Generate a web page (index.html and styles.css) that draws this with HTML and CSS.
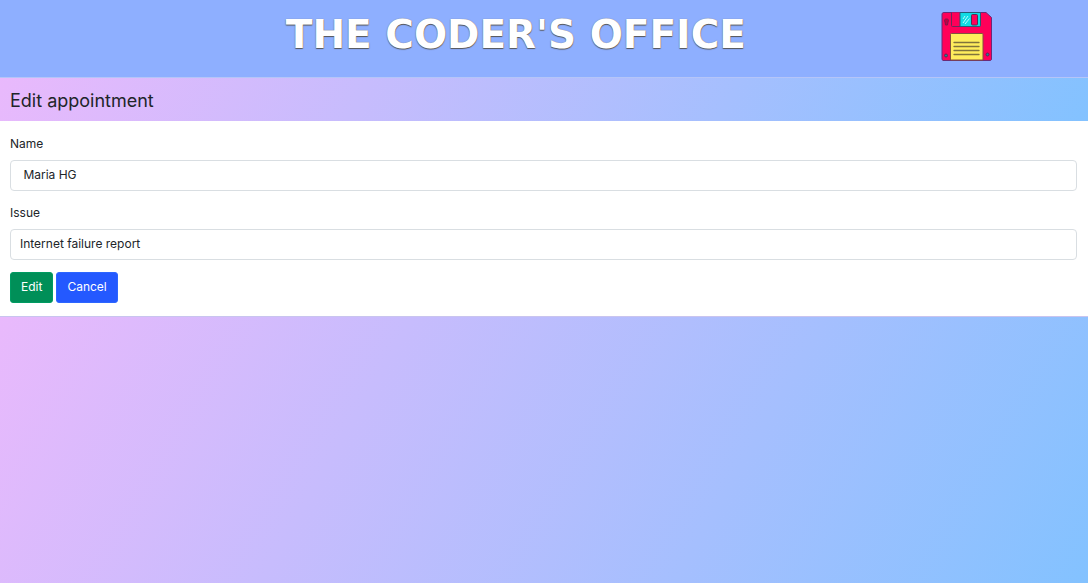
FILE: index.html
```html
<!DOCTYPE html>
<html lang="en">
<head>
<meta charset="utf-8">
<meta name="viewport" content="width=device-width, initial-scale=1">
<title>The Coder's Office</title>
<link rel="stylesheet" href="styles.css">
</head>
<body>
<header class="banner">
  <h1 class="banner-title">THE CODER'S OFFICE</h1>
  <svg class="banner-logo" viewBox="0 0 54 52" role="img" aria-label="Floppy disk">
    <path d="M4 1.500H46L51.500 6.500V48Q51.500 49 50.500 49.500H3Q2 49 2 48V3Q2 1.500 4 1.500Z" fill="#ff0059" stroke="#6b2a78" stroke-width="1"/>
    <path d="M11.500 1.500V14.500Q11.500 15.500 12.500 15.500H39Q40.500 15.500 40.500 14.500V1.500" fill="#ff0059" stroke="#6b2a5c" stroke-width="1"/>
    <path d="M20 1.500H40.500V14.500Q40.500 15.500 39 15.500H20Z" fill="#10dce4" stroke="#245d77" stroke-width="1"/>
    <rect x="31.500" y="3.500" width="6" height="10.500" rx="1" fill="#ff0059" stroke="#5c2854"/>
    <path d="M23 12L28 5M25 13L29.500 7.500M23 8L25 5" stroke="#b8fbff" stroke-width="1"/>
    <path d="M5 11Q3.500 8 6.500 8Q9.500 8 8 11L7.500 14H5.500Z" fill="#c00045" stroke="#7b174e" stroke-width="1"/>
    <path d="M10.500 49V23.500Q10.500 22.500 11.500 22.500H42Q43 22.500 43 23.500V49Z" fill="#ffed5c" stroke="#82533c" stroke-width="1"/>
    <path d="M14 31.500H39M14 35.500H39M14 39.500H39M14 43.500H39" stroke="#80733c" stroke-width="1.300" stroke-linecap="round"/>
    <circle cx="6" cy="44.500" r="1.500" fill="#168a9b" stroke="#5c2854"/>
    <circle cx="47.500" cy="43.500" r="1.500" fill="#168a9b" stroke="#5c2854"/>
  </svg>
</header>
<main class="card">
  <h2 class="card-header">Edit appointment</h2>
  <form class="card-body">
    <div class="field">
      <label for="name">Name</label>
      <input class="control" id="name" type="text" value=" Maria HG">
    </div>
    <div class="field">
      <label for="issue">Issue</label>
      <input class="control" id="issue" type="text" value="Internet failure report">
    </div>
    <div class="actions">
      <button class="btn btn-edit" type="submit">Edit</button>
      <button class="btn btn-cancel" type="button">Cancel</button>
    </div>
  </form>
</main>
<div class="backdrop"></div>
</body>
</html>
```
FILE: styles.css
```css
* {
  box-sizing: border-box;
}

body {
  display: flex;
  flex-direction: column;
  min-height: 100vh;
  margin: 0;
  color: #212529;
  font: 12px/20px Inter, sans-serif;
}

.banner {
  display: grid;
  grid-template-columns: 17% 1fr 22%;
  align-items: start;
  justify-items: center;
  padding: 11px 2px 14px 0;
  background: #8eafff;
}

.banner-title {
  grid-column: 2;
  margin: 0;
  color: #fff;
  font: bold 39px/48px "DejaVu Sans", sans-serif;
  text-shadow: 0 1px 1px #555, 0 0 1px #777;
  white-space: nowrap;
}

.banner-logo {
  width: 54px;
  height: 52px;
}

.card {
  background: #fff;
  border-top: 1px solid #b5c5f8;
  border-bottom: 1px solid #c9c4ef;
}

.card-header,
.backdrop {
  background: linear-gradient(120deg, #e9b9fc, #83c2ff);
}

.card-header {
  margin: 0;
  padding: 11px 10px 8px;
  font-size: 18px;
  font-weight: 400;
  line-height: 24px;
}

.card-body {
  display: grid;
  gap: 12px;
  padding: 13px 11px 13px 10px;
}

.field {
  display: grid;
  gap: 6px;
}

.control {
  width: 100%;
  height: 31px;
  padding: 0 9px 3px;
  border: 1px solid #d9dee2;
  border-radius: 4px;
  background: #fff;
  color: #212529;
  font: inherit;
}

.actions {
  display: flex;
  gap: 3px;
}

.btn {
  height: 31px;
  padding: 0 10px 1px;
  border: 1px solid;
  border-radius: 3px;
  color: #fff;
  font: inherit;
}

.btn-edit {
  border-color: #009b62;
  background: #008f58;
}

.btn-cancel {
  border-color: #2c66ff;
  background: #2459ff;
}

.backdrop {
  flex: 1;
}
```
